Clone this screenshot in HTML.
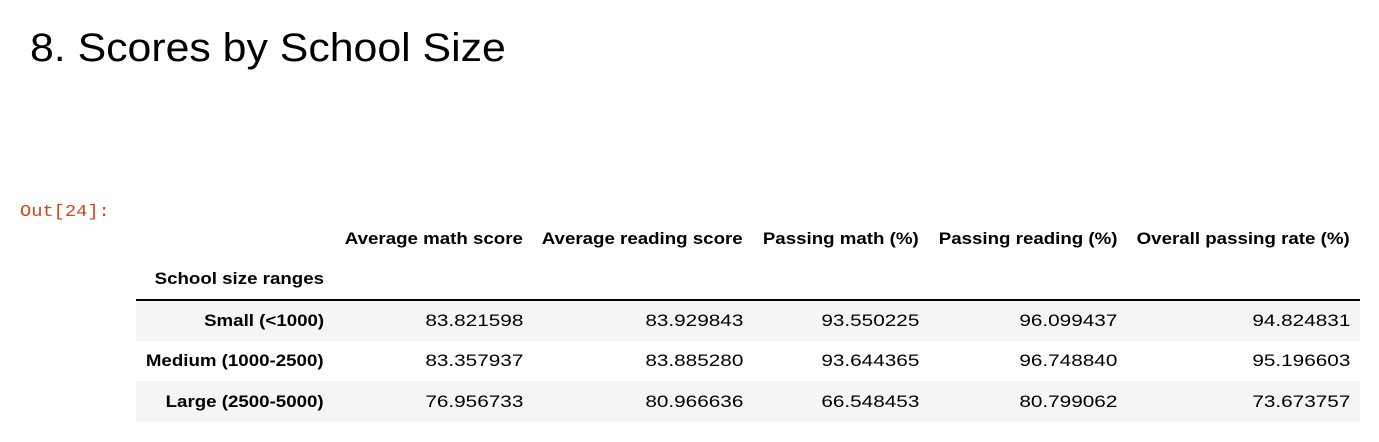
<!DOCTYPE html>
<html><head><style>
body{margin:0;width:1379px;height:442px;background:#fff;position:relative;font-family:"Liberation Sans",Arial,sans-serif;overflow:hidden}
.t{position:absolute;left:30px;top:26px;font-size:40px;color:#000;white-space:nowrap;transform:scaleX(1.07);transform-origin:left top}
.out{position:absolute;left:20px;top:203px;font-family:"Liberation Mono",monospace;font-size:17px;color:#d84315;transform:scaleX(1.1);transform-origin:left top}
.r{position:absolute;white-space:nowrap;font-size:17px;color:#000;transform-origin:right top}
.b{font-weight:bold;transform:scaleX(1.1)}
.n{transform:scaleX(1.22)}
.row{position:absolute;left:136px;width:1224px}
</style></head><body>
<div class="t">8. Scores by School Size</div>
<div class="out">Out[24]:</div>
<div class="row" style="top:299px;height:2px;background:#000"></div>
<div class="row" style="top:301px;height:40px;background:#f5f5f5"></div>
<div class="row" style="top:381px;height:41px;background:#f5f5f5"></div>
<div id="c"></div>
<script>
var cols=[324,523,743,919,1117,1350];
var hdr=["","Average math score","Average reading score","Passing math (%)","Passing reading (%)","Overall passing rate (%)"];
var rows=[["Small (<1000)","83.821598","83.929843","93.550225","96.099437","94.824831"],
["Medium (1000-2500)","83.357937","83.885280","93.644365","96.748840","95.196603"],
["Large (2500-5000)","76.956733","80.966636","66.548453","80.799062","73.673757"]];
var h="";
function cell(x,y,t,b){h+='<div class="r '+(b?'b':'n')+'" style="right:'+(1379-x)+'px;top:'+y+'px">'+t.replace(/</g,'&lt;')+'</div>';}
for(var i=1;i<6;i++)cell(cols[i],229,hdr[i],1);
cell(cols[0],269,"School size ranges",1);
var ys=[311,351,392];
rows.forEach(function(r,j){r.forEach(function(v,i){cell(cols[i],ys[j],v,i==0);});});
document.getElementById("c").innerHTML=h;
</script>
</body></html>
